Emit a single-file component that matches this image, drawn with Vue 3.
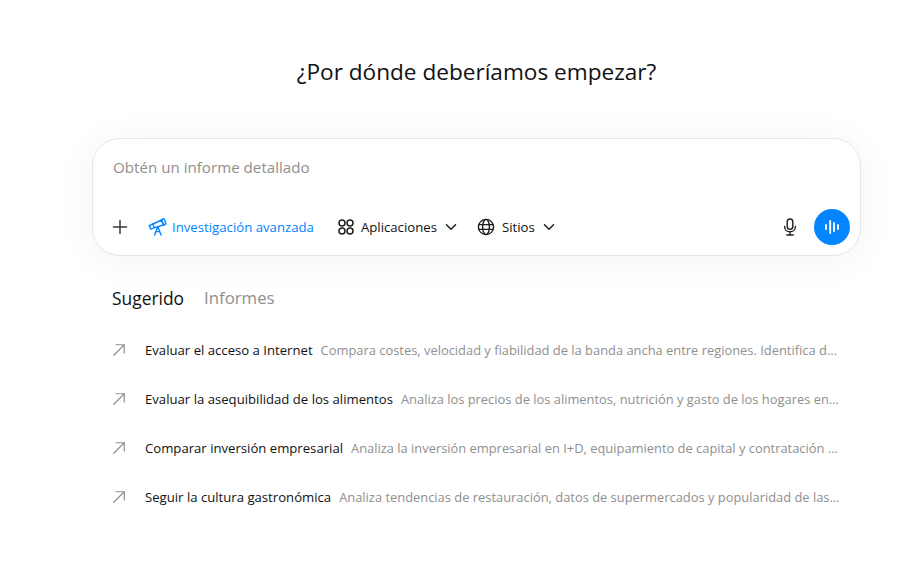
<script setup>
const suggestions = [
  {
    title: "Evaluar el acceso a Internet",
    text: "Compara costes, velocidad y fiabilidad de la banda ancha entre regiones. Identifica de forma clara las zonas",
  },
  {
    title: "Evaluar la asequibilidad de los alimentos",
    text: "Analiza los precios de los alimentos, nutrición y gasto de los hogares entre países y regiones",
  },
  {
    title: "Comparar inversión empresarial",
    text: "Analiza la inversión empresarial en I+D, equipamiento de capital y contratación de personal por sectores",
  },
  {
    title: "Seguir la cultura gastronómica",
    text: "Analiza tendencias de restauración, datos de supermercados y popularidad de las recetas en varios países",
  },
];
</script>

<template>
  <div class="page">
    <h1 class="title">¿Por dónde deberíamos empezar?</h1>

    <div class="composer">
      <div class="placeholder">Obtén un informe detallado</div>
      <div class="toolbar">
        <svg class="plus" width="20" height="20" viewBox="0 0 20 20" fill="none" stroke="#3a3a3a" stroke-width="1.5" stroke-linecap="round">
          <path d="M10 3.5v13M3.5 10h13" />
        </svg>
        <div class="tool tool--active">
          <svg width="20" height="20" viewBox="0 0 20 20" fill="none" stroke="#0285ff" stroke-width="1.4" stroke-linejoin="round" stroke-linecap="round">
            <path d="M2.2 8.6 5.8 7l1.7 3.6-3.6 1.6z" />
            <path d="M5.8 7 14.6 3l2 5-9.1 2.6" />
            <path d="M14.4 2.6 17 1.6l2 5.2-2.4 1.2z" />
            <path d="M10.6 10 7.6 18M11 10l3 8M9 14.6h3.6" />
          </svg>
          <span>Investigación avanzada</span>
        </div>
        <div class="tool tool--apps">
          <svg width="20" height="20" viewBox="0 0 20 20" fill="none" stroke="#1f1f1f" stroke-width="1.5">
            <circle cx="6" cy="6" r="3" />
            <circle cx="14" cy="6" r="3" />
            <circle cx="6" cy="14" r="3" />
            <circle cx="14" cy="14" r="3" />
          </svg>
          <span>Aplicaciones</span>
          <svg class="chevron" width="14" height="14" viewBox="0 0 14 14" fill="none" stroke="#1f1f1f" stroke-width="1.5" stroke-linecap="round" stroke-linejoin="round">
            <path d="M2.5 4.8 7 9.3l4.5-4.5" />
          </svg>
        </div>
        <div class="tool">
          <svg width="20" height="20" viewBox="0 0 20 20" fill="none" stroke="#1f1f1f" stroke-width="1.4">
            <circle cx="10" cy="10" r="7.6" />
            <ellipse cx="10" cy="10" rx="3.4" ry="7.6" />
            <path d="M2.6 7.6h14.8M2.6 12.4h14.8" />
          </svg>
          <span>Sitios</span>
          <svg class="chevron" width="14" height="14" viewBox="0 0 14 14" fill="none" stroke="#1f1f1f" stroke-width="1.5" stroke-linecap="round" stroke-linejoin="round">
            <path d="M2.5 4.8 7 9.3l4.5-4.5" />
          </svg>
        </div>
        <div class="spacer"></div>
        <svg class="mic" width="20" height="20" viewBox="0 0 20 20" fill="none" stroke="#1f1f1f" stroke-width="1.4" stroke-linecap="round">
          <rect x="7.2" y="2" width="5.6" height="10.4" rx="2.8" />
          <path d="M4.6 9.4c0 3.2 2.4 5.4 5.4 5.4s5.4-2.2 5.4-5.4M10 14.8v3M6.8 18h6.4" />
        </svg>
        <div class="voice">
          <svg width="20" height="20" viewBox="0 0 20 20" fill="none" stroke="#fff" stroke-width="1.9" stroke-linecap="round">
            <path d="M4 8v4M8.2 4v12M12 6v8M16 8v4" />
          </svg>
        </div>
      </div>
    </div>

    <div class="tabs">
      <span class="tab tab--active">Sugerido</span>
      <span class="tab">Informes</span>
    </div>

    <ul class="list">
      <li v-for="item in suggestions" :key="item.title" class="row">
        <svg class="arrow" width="14" height="14" viewBox="0 0 16 16" fill="none" stroke="#8f8f8f" stroke-width="1.4" stroke-linecap="round" stroke-linejoin="round">
          <path d="M2 14 14 2M4.6 2H14v9.4" />
        </svg>
        <span class="row-text"><span class="row-title">{{ item.title }}</span><span class="row-desc">{{ item.text }}</span></span>
      </li>
    </ul>
  </div>
</template>

<style scoped>
.page {
  width: 769px;
  margin-left: 92px;
  padding-top: 54px;
  font-family: "Open Sans", "Noto Sans", sans-serif;
  color: #1a1a1a;
}

.title {
  margin: 0 0 48px;
  font-size: 22.6px;
  line-height: 36px;
  font-weight: 400;
  text-align: center;
  color: #111;
}

.composer {
  box-sizing: border-box;
  height: 118px;
  padding: 17px 10px 0 20px;
  border: 1px solid #e6e6e6;
  border-radius: 28px;
  background: #fff;
  box-shadow: 0 4px 40px rgba(0, 0, 0, 0.05);
}

.placeholder {
  font-size: 15.15px;
  line-height: 22px;
  color: #8f8f8f;
}

.toolbar {
  display: flex;
  align-items: center;
  height: 36px;
  margin-top: 31px;
  margin-left: -3px;
}

.plus {
  margin-right: 17px;
}

.tool {
  display: flex;
  align-items: center;
  gap: 6px;
  margin-right: 22px;
  font-size: 13.2px;
  color: #111;
}

.tool--active {
  gap: 5px;
  color: #0285ff;
}

.tool--apps {
  gap: 5px;
  margin-right: 18px;
}

.tool--apps .chevron {
  margin-left: 2px;
}

.chevron {
  margin-left: 1px;
}

.spacer {
  flex: 1;
}

.mic {
  margin-right: 14px;
}

.voice {
  display: flex;
  align-items: center;
  justify-content: center;
  width: 36px;
  height: 36px;
  border-radius: 50%;
  background: #0285ff;
}

.tabs {
  display: flex;
  gap: 20px;
  margin-top: 29px;
  padding-left: 20px;
}

.tab {
  font-size: 16.8px;
  line-height: 26px;
  color: #8f8f8f;
}

.tab--active {
  font-size: 17.4px;
  color: #111;
}

.list {
  margin: 14px 0 0;
  padding: 0 20px;
  list-style: none;
}

.row {
  display: flex;
  align-items: center;
  height: 49px;
}

.arrow {
  flex: none;
  margin-right: 19px;
}

.row-text {
  overflow: hidden;
  white-space: nowrap;
  text-overflow: ellipsis;
  font-size: 12.9px;
  color: #8f8f8f;
}

.row-title {
  margin-right: 8px;
  font-size: 13.15px;
  color: #111;
}
</style>

<style>
body {
  background: #fff;
}
</style>
